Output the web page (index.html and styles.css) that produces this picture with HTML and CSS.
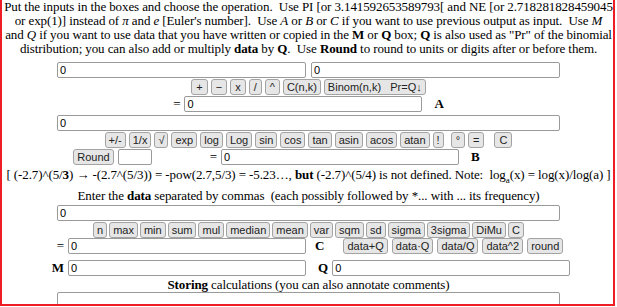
FILE: index.html
```html
<!DOCTYPE html>
<html lang="en">
<head>
  <meta charset="UTF-8" />
  <title>Calculator</title>
  <link rel="stylesheet" href="styles.css">
</head>
<body>
  <div class="frame">
    <!-- instructions -->
    <p class="intro">
      Put the inputs in the boxes and choose the operation.&nbsp; Use PI [or 3.141592653589793[ and NE [or 2.718281828459045<br>
      or exp(1)] instead of <i>&pi;</i> and <i>e</i> [Euler's number].&nbsp; Use <i>A</i> or <i>B</i> or <i>C</i> if you want to use previous output as input.&nbsp; Use <i>M</i><br>
      and <i>Q</i> if you want to use data that you have written or copied in the <b>M</b> or <b>Q</b> box; <b>Q</b> is also used as "Pr" of the binomial<br>
      distribution; you can also add or multiply <b>data</b> by <b>Q</b>.&nbsp; Use <b>Round</b> to round to units or digits after or before them.
    </p>

    <!-- two operands -->
    <div class="row first">
      <input type="text" class="half" value="0" />
      <input type="text" class="half" value="0" />
    </div>
    <div class="row keys">
      <button class="op">+</button>
      <button class="op">&minus;</button>
      <button class="op">x</button>
      <button class="op">/</button>
      <button class="op">^</button>
      <button>C(n,k)</button>
      <button>Binom(n,k)&nbsp;&nbsp; Pr=Q&darr;</button>
    </div>
    <div class="row">
      <span class="eq">=</span>
      <input type="text" class="mid" value="0" />
      <b class="label">A</b>
    </div>

    <!-- one operand -->
    <div class="row gap3">
      <input type="text" class="wide" value="0" />
    </div>
    <div class="row keys">
      <button>+/-</button>
      <button>1/x</button>
      <button>&radic;</button>
      <button>exp</button>
      <button>log</button>
      <button>Log</button>
      <button>sin</button>
      <button>cos</button>
      <button>tan</button>
      <button>asin</button>
      <button>acos</button>
      <button>atan</button>
      <button>!</button>
      <button class="sp op">&deg;</button>
      <button class="op">=</button>
      <button class="sp2 op">C</button>
    </div>
    <div class="row round-row">
      <button>Round</button>
      <input type="text" class="tiny" />
      <span class="eq far">=</span>
      <input type="text" class="mid" value="0" />
      <b class="label">B</b>
    </div>

    <p class="note">[ (-2.7)^(5/<b>3</b>) &rarr; -(2.7^(5/3)) = -pow(2.7,5/3) = -5.23&hellip;, <b>but</b> (-2.7)^(5/4) is not defined. Note:&nbsp; log<sub>a</sub>(x) = log(x)/log(a) ]</p>

    <!-- data -->
    <p class="data-title">Enter the <b>data</b> separated by commas&nbsp; (each possibly followed by *... with ... its frequency)</p>
    <div class="row gap2">
      <input type="text" class="wide" value="0" />
    </div>
    <div class="row keys tight">
      <button>n</button>
      <button>max</button>
      <button>min</button>
      <button>sum</button>
      <button>mul</button>
      <button>median</button>
      <button>mean</button>
      <button>var</button>
      <button>sqm</button>
      <button>sd</button>
      <button>sigma</button>
      <button>3sigma</button>
      <button>DiMu</button>
      <button>C</button>
    </div>
    <div class="pair">
      <div class="left">
        <span class="eq">=</span>
        <input type="text" class="mid" value="0" />
      </div>
      <div class="right">
        <b class="label c">C</b>
        <button>data+Q</button>
        <button>data&middot;Q</button>
        <button>data/Q</button>
        <button>data^2</button>
        <button>round</button>
      </div>
    </div>
    <div class="pair mq">
      <div class="left">
        <b class="label">M</b>
        <input type="text" class="mid" value="0" />
      </div>
      <div class="right">
        <b class="label q">Q</b>
        <input type="text" class="mid" value="0" />
      </div>
    </div>

    <!-- storage -->
    <p class="store"><b>Storing</b> calculations (you can also annotate comments)</p>
    <div class="memo-row">
      <textarea class="wide memo"></textarea>
    </div>
  </div>
</body>
</html>
```

FILE: styles.css
```css
body {
  margin: 0;
  background: #fff;
  font-family: "Liberation Serif", "Times New Roman", serif;
  font-size: 13px;
  color: #000;
}

.frame {
  width: 609px;
  height: 304px;
  padding-left: 2px;
  border: 2px solid #ee1c24;
  border-top: none;
  overflow: hidden;
}

p {
  margin: 0;
  text-align: center;
  line-height: 14px;
  letter-spacing: -0.1px;
  white-space: nowrap;
}

.row {
  display: flex;
  justify-content: center;
  align-items: center;
  height: 16px;
  margin-top: 1px;
}

.first {
  margin-top: 6px;
  gap: 5px;
}

.gap3 {
  margin-top: 3px;
}

.gap2 {
  margin-top: 2px;
}

.keys {
  gap: 3px;
}

.keys.tight {
  gap: 2px;
}

input, textarea {
  box-sizing: border-box;
  height: 16px;
  margin: 0;
  padding: 0 2px;
  border: 1px solid #9a9a9a;
  border-radius: 2px;
  font-family: "Liberation Sans", Arial, sans-serif;
  font-size: 11px;
  color: #000;
  background: #fff;
}

.half {
  width: 249px;
}

.wide {
  width: 503px;
}

.mid {
  width: 238px;
}

.tiny {
  width: 34px;
  margin-left: 4px;
}

button {
  box-sizing: border-box;
  height: 16px;
  margin: 0;
  padding: 0 3px;
  border: 1px solid #a3a3a3;
  border-radius: 3px;
  background: #e6e6e6;
  font-family: "Liberation Sans", Arial, sans-serif;
  font-size: 11px;
  line-height: 14px;
  color: #222;
  cursor: pointer;
}

button.op {
  padding: 0 4px;
}

.keys .sp {
  margin-left: 4px;
}

.keys .sp2 {
  margin-left: 7px;
}

.eq {
  margin-right: 4px;
}

.far {
  margin-left: 58px;
}

.label {
  margin-left: 12px;
}

.round-row {
  height: 17px;
  margin-top: 0;
  padding-right: 64px;
}

.note {
  margin-top: 3px;
}

.note sub {
  font-size: 9px;
  line-height: 0;
}

.data-title {
  margin-top: 7px;
}

.pair {
  display: grid;
  grid-template-columns: 302px 1fr;
  column-gap: 8px;
  height: 16px;
}

.pair .left {
  display: flex;
  justify-content: flex-end;
  align-items: center;
}

.pair .right {
  display: flex;
  align-items: center;
  gap: 4px;
}

.pair .left .label {
  margin: 0 4px 0 0;
}

.pair .right .c {
  margin: 0 15px 0 1px;
}

.pair .right .q {
  margin: 0 0 0 4px;
}

.mq {
  margin-top: 6px;
}

.store {
  margin-top: 2px;
}

.memo-row {
  display: flex;
  justify-content: center;
}

.memo {
  height: 30px;
  resize: none;
}
```
